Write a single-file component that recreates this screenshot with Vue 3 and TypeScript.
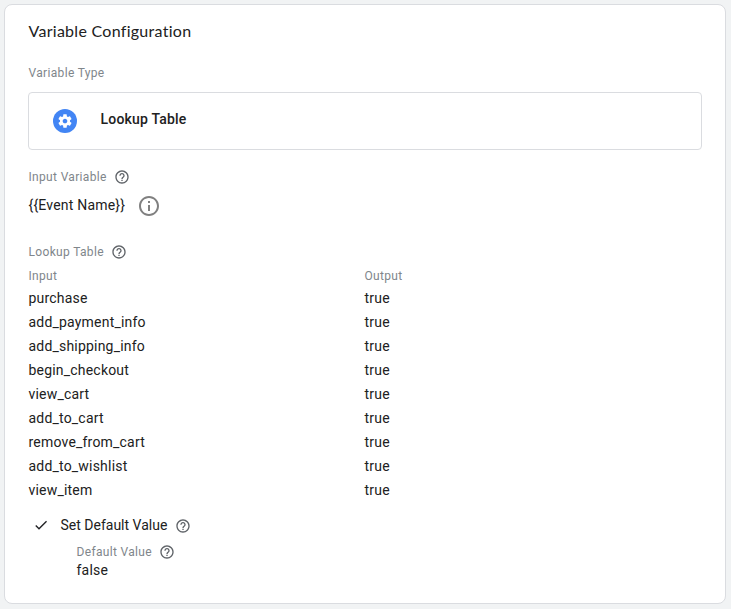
<script setup lang="ts">
interface LookupRow {
  input: string
  output: string
}

const inputVariable = '{{Event Name}}'

const rows: LookupRow[] = [
  'purchase',
  'add_payment_info',
  'add_shipping_info',
  'begin_checkout',
  'view_cart',
  'add_to_cart',
  'remove_from_cart',
  'add_to_wishlist',
  'view_item',
].map((input) => ({ input, output: 'true' }))

const helpPath =
  'M11 18h2v-2h-2v2zm1-16C6.48 2 2 6.48 2 12s4.48 10 10 10 10-4.48 10-10S17.52 2 12 2zm0 18c-4.41 0-8-3.59-8-8s3.59-8 8-8 8 3.59 8 8-3.59 8-8 8zm0-14c-2.21 0-4 1.79-4 4h2c0-1.1.9-2 2-2s2 .9 2 2c0 2-3 1.75-3 5h2c0-2.25 3-2.5 3-5 0-2.21-1.79-4-4-4z'
</script>

<template>
  <main class="page">
    <section class="card">
      <h1 class="title">Variable Configuration</h1>

      <div class="label">Variable Type</div>
      <div class="type-box">
        <span class="type-icon">
          <svg viewBox="0 0 24 24" width="16" height="16">
            <path d="M19.43 12.98c.04-.32.07-.64.07-.98s-.03-.66-.07-.98l2.11-1.65c.19-.15.24-.42.12-.64l-2-3.46c-.12-.22-.39-.3-.61-.22l-2.49 1c-.52-.4-1.08-.73-1.69-.98l-.38-2.65C14.46 2.18 14.25 2 14 2h-4c-.25 0-.46.18-.49.42l-.38 2.65c-.61.25-1.17.59-1.69.98l-2.49-1c-.23-.09-.49 0-.61.22l-2 3.46c-.13.22-.07.49.12.64l2.11 1.65c-.04.32-.07.65-.07.98s.03.66.07.98l-2.11 1.65c-.19.15-.24.42-.12.64l2 3.46c.12.22.39.3.61.22l2.49-1c.52.4 1.08.73 1.69.98l.38 2.65c.03.24.24.42.49.42h4c.25 0 .46-.18.49-.42l.38-2.65c.61-.25 1.17-.59 1.69-.98l2.49 1c.23.09.49 0 .61-.22l2-3.46c.12-.22.07-.49-.12-.64l-2.11-1.65zM12 15.5c-1.93 0-3.5-1.57-3.5-3.5s1.57-3.5 3.5-3.5 3.5 1.57 3.5 3.5-1.57 3.5-3.5 3.5z" />
          </svg>
        </span>
        <span class="type-name">Lookup Table</span>
      </div>

      <div class="label input-label">
        Input Variable
        <svg class="help" viewBox="0 0 24 24"><path :d="helpPath" /></svg>
      </div>
      <div class="input-value">
        <span>{{ inputVariable }}</span>
        <svg class="info" viewBox="0 0 24 24">
          <path d="M11 17h2v-6h-2v6zm1-15C6.48 2 2 6.48 2 12s4.48 10 10 10 10-4.48 10-10S17.52 2 12 2zm0 18c-4.41 0-8-3.59-8-8s3.59-8 8-8 8 3.59 8 8-3.59 8-8 8zM11 9h2V7h-2v2z" />
        </svg>
      </div>

      <div class="label table-label">
        Lookup Table
        <svg class="help" viewBox="0 0 24 24"><path :d="helpPath" /></svg>
      </div>
      <div class="row head">
        <span class="label">Input</span>
        <span class="label">Output</span>
      </div>
      <div v-for="row in rows" :key="row.input" class="row">
        <span>{{ row.input }}</span>
        <span>{{ row.output }}</span>
      </div>

      <div class="default-toggle">
        <svg class="check" viewBox="0 0 24 24">
          <path d="M9 16.17L4.83 12l-1.42 1.41L9 19 21 7l-1.41-1.41z" />
        </svg>
        <span>Set Default Value</span>
        <svg class="help" viewBox="0 0 24 24"><path :d="helpPath" /></svg>
      </div>
      <div class="default-value">
        <div class="label">
          Default Value
          <svg class="help" viewBox="0 0 24 24"><path :d="helpPath" /></svg>
        </div>
        <div class="value">false</div>
      </div>
    </section>
  </main>
</template>

<style>
body {
  background: #f1f3f4;
}
</style>

<style scoped>
.page {
  box-sizing: border-box;
  height: 609px;
  padding: 4px 5px 5px 4px;
  background: #f1f3f4;
  font-family: Roboto, "Liberation Sans", sans-serif;
  font-size: 14px;
  line-height: 24px;
  letter-spacing: 0.2px;
  color: #212121;
}

.card {
  box-sizing: border-box;
  height: 600px;
  padding: 14px 23px 0 23px;
  border: 1px solid #dadce0;
  border-radius: 8px;
  background: #fff;
}

.title {
  margin: 0 0 22px;
  font-family: Lato, Roboto, sans-serif;
  font-size: 16px;
  font-weight: 400;
  line-height: 24px;
  letter-spacing: 0.28px;
}

.label {
  display: flex;
  align-items: center;
  gap: 7px;
  font-size: 12px;
  line-height: 16px;
  letter-spacing: 0.33px;
  color: #80868b;
}

.title,
.label,
.row,
.input-value,
.type-name,
.value {
  text-indent: 0.5px;
}

.help {
  flex: none;
  width: 16px;
  height: 16px;
  fill: #5f6368;
}

.type-box {
  display: flex;
  box-sizing: border-box;
  height: 58px;
  margin: 11px 0 19px;
  padding: 14px 24px 0;
  border: 1px solid #dadce0;
  border-radius: 4px;
}

.type-icon {
  display: flex;
  align-items: center;
  justify-content: center;
  width: 24px;
  height: 24px;
  margin: 2px 23px 0 0;
  border-radius: 50%;
  background: #4285f4;
  fill: #fff;
}

.type-name {
  font-weight: 500;
}

.input-value {
  display: flex;
  gap: 11.5px;
  height: 24px;
  margin: 8px 0 27px;
}

.info {
  width: 24px;
  height: 24px;
  margin-top: 1px;
  fill: #808080;
}

.table-label {
  margin-bottom: 8px;
}

.row {
  display: grid;
  grid-template-columns: 336px 1fr;
}

.head {
  margin-bottom: 2px;
}

.default-toggle {
  display: flex;
  align-items: center;
  gap: 7.5px;
  margin: 11px 0 7px 4.5px;
  letter-spacing: 0;
}

.default-toggle .help {
  margin-top: 1px;
}

.check {
  width: 16px;
  height: 16px;
  margin: -1px 4.5px 0 0;
  fill: #202124;
}

.default-value {
  padding-left: 48px;
}

.value {
  line-height: 20px;
}
</style>
